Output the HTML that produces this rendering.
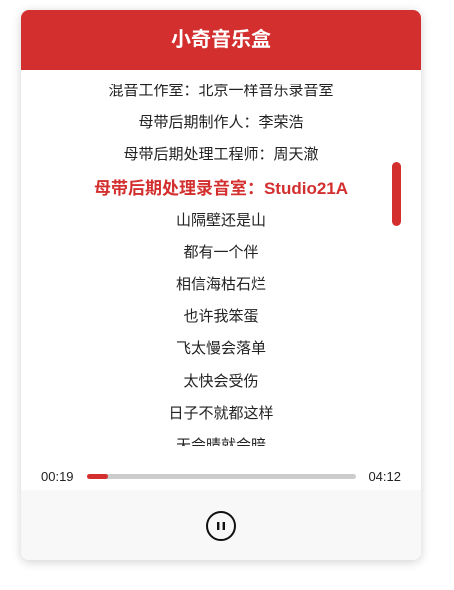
<!DOCTYPE html><html><head><meta charset="utf-8"><style>
body{margin:0;width:454px;height:590px;background:#fff;font-family:"Liberation Sans","Noto Sans CJK SC",sans-serif;position:relative;overflow:hidden}
.card{position:absolute;left:21px;top:10px;width:400px;height:550px;border-radius:8px;background:#fff;box-shadow:0 2px 10px rgba(0,0,0,.18);overflow:hidden}
.hd{height:60px;background:#d32f2f;color:#fff;font-size:20px;font-weight:bold;text-align:center;line-height:60px}
.ly{position:absolute;top:74px;left:0;width:400px;height:362px;overflow:hidden}
.in{position:absolute;top:-9px;left:0;width:400px;text-align:center}
.in div{height:32.2px;line-height:32px;font-size:15px;color:#222}
.in .a{color:#d32f2f;font-weight:bold;font-size:17px;height:33px;line-height:33px}
.sb{position:absolute;left:371px;top:152px;width:9px;height:64px;border-radius:5px;background:#d32f2f}
.pr{position:absolute;top:455px;left:0;width:400px;height:24px;font-size:13px;color:#222}
.pr .t1{position:absolute;left:20px;top:4px}.pr .t2{position:absolute;right:20px;top:4px}
.bar{position:absolute;left:66px;top:9px;width:269px;height:5px;border-radius:3px;background:#ccc}
.bar i{position:absolute;left:0;top:0;width:21px;height:5px;border-radius:3px;background:#d32f2f}
.ct{position:absolute;top:480px;left:0;width:400px;height:70px;background:#f8f8f8}
</style></head><body><div class="card">
<div class="hd">小奇音乐盒</div>
<div class="ly"><div class="in">
<div>混音工作室：北京一样音乐录音室</div>
<div>母带后期制作人：李荣浩</div>
<div>母带后期处理工程师：周天澈</div>
<div class="a">母带后期处理录音室：Studio21A</div>
<div>山隔壁还是山</div>
<div>都有一个伴</div>
<div>相信海枯石烂</div>
<div>也许我笨蛋</div>
<div>飞太慢会落单</div>
<div>太快会受伤</div>
<div>日子不就都这样</div>
<div>天会晴就会暗</div>
</div></div>
<div class="sb"></div>
<div class="pr"><span class="t1">00:19</span><div class="bar"><i></i></div><span class="t2">04:12</span></div>
<div class="ct"><svg style="position:absolute;left:184px;top:20px" width="32" height="32" viewBox="0 0 32 32"><circle cx="16" cy="16" r="14" fill="none" stroke="#111" stroke-width="2"/><rect x="12" y="12" width="2.4" height="8" fill="#111"/><rect x="17.6" y="12" width="2.4" height="8" fill="#111"/></svg></div>
</div></body></html>
